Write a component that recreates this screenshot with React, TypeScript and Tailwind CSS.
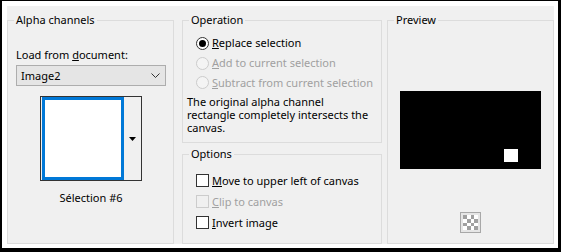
import React from "react";

function Radio({ checked, disabled }: { checked?: boolean; disabled?: boolean }) {
  return (
    <span
      className={
        "flex h-[13px] w-[13px] shrink-0 items-center justify-center rounded-full border " +
        (disabled ? "border-[#cccccc] bg-[#f4f4f4]" : "border-[#333333] bg-white")
      }
    >
      {checked ? <span className="h-[7px] w-[7px] rounded-full bg-black" /> : null}
    </span>
  );
}

function Check({ disabled }: { disabled?: boolean }) {
  return (
    <span
      className={
        "block h-[13px] w-[13px] shrink-0 border " +
        (disabled ? "border-[#cccccc] bg-[#f0f0f0]" : "border-[#333333] bg-white")
      }
    />
  );
}

function Row({
  control,
  ul,
  rest,
  disabled,
  h,
}: {
  control: React.ReactNode;
  ul: string;
  rest: string;
  disabled?: boolean;
  h: string;
}) {
  return (
    <div className={"flex items-center gap-[3px] " + h}>
      {control}
      <span className={"leading-[16px] " + (disabled ? "text-[#a0a0a0]" : "text-black")}>
        <u className="underline-offset-[1px]">{ul}</u>
        {rest}
      </span>
    </div>
  );
}

export default function App() {
  return (
    <div className="h-[252px] w-[561px] bg-black pb-[4px] pl-[2px] pr-[3px] pt-[1px]">
      <div className="h-full bg-white pb-[4px] pl-[5px] pr-[4px] pt-[5px]">
        <div className="flex h-full bg-[#f0f0f0] font-['Noto_Sans',sans-serif] text-[11px] text-black">
          {/* Alpha channels */}
          <fieldset className="mt-[6px] h-[232px] w-[167px] shrink-0 border border-[#dcdcdc]">
            <legend className="ml-[6px] px-[2px] leading-[16px]">Alpha channels</legend>
            <div className="flex flex-col pl-[8px]">
              <div className="mt-[19px] leading-[16px]">
                Load from <u className="underline-offset-[1px]">d</u>ocument:
              </div>
              <div className="mt-[2px] flex h-[21px] w-[150px] items-center justify-between border border-[#adadad] bg-[#e5e5e5] pl-[4px] pr-[5px]">
                <span className="leading-[16px]">Image2</span>
                <svg width="9" height="6" viewBox="0 0 9 6">
                  <polyline points="0.5,0.5 4.5,4.5 8.5,0.5" fill="none" stroke="#333" strokeWidth="1" />
                </svg>
              </div>
              <div className="ml-[24px] mt-[10px] flex h-[85px] w-[102px] border border-[#333333] bg-[#f0f0f0]">
                <div className="ml-[1px] h-full w-[82px] border-[3px] border-[#0078d7] bg-white" />
                <div className="flex flex-1 items-center justify-center">
                  <svg width="7" height="4" viewBox="0 0 7 4">
                    <polygon points="0,0 7,0 3.5,4" fill="#000" />
                  </svg>
                </div>
              </div>
              <div className="mt-[9px] w-[150px] text-center leading-[16px]">Sélection #6</div>
            </div>
          </fieldset>

          {/* Middle column */}
          <div className="ml-[8px] flex w-[200px] shrink-0 flex-col">
            <fieldset className="mt-[6px] h-[131px] border border-[#dcdcdc]">
              <legend className="ml-[6px] px-[2px] leading-[16px]">Operation</legend>
              <div className="mt-[5px] pl-[13px]">
                <Row h="h-[20px]" control={<Radio checked />} ul="R" rest="eplace selection" />
                <Row h="h-[20px]" control={<Radio disabled />} ul="A" rest="dd to current selection" disabled />
                <Row h="h-[19px]" control={<Radio disabled />} ul="S" rest="ubtract from current selection" disabled />
              </div>
              <div className="mt-[3px] pl-[4px] leading-[13px]">
                The original alpha channel
                <br />
                rectangle completely intersects the
                <br />
                canvas.
              </div>
            </fieldset>
            <fieldset className="mt-[3px] h-[98px] border border-[#dcdcdc]">
              <legend className="ml-[6px] px-[2px] leading-[16px]">Options</legend>
              <div className="mt-[8px] pl-[13px]">
                <Row h="h-[21px]" control={<Check />} ul="M" rest="ove to upper left of canvas" />
                <Row h="h-[21px]" control={<Check disabled />} ul="C" rest="lip to canvas" disabled />
                <Row h="h-[21px]" control={<Check />} ul="I" rest="nvert image" />
              </div>
            </fieldset>
          </div>

          {/* Preview */}
          <fieldset className="ml-[5px] mt-[6px] h-[232px] w-[167px] shrink-0 border border-[#dcdcdc]">
            <legend className="ml-[6px] px-[2px] leading-[16px]">Preview</legend>
            <div className="flex flex-col items-center">
              <div className="mt-[63px] flex h-[78px] w-[141px] bg-black pl-[104px] pt-[58px]">
                <div className="h-[13px] w-[14px] bg-white" />
              </div>
              <div className="mt-[43px] flex h-[21px] w-[21px] items-center justify-center border border-[#a8a8a8] bg-[#e6e6e6]">
                <svg width="15" height="15" viewBox="0 0 4 4" shapeRendering="crispEdges">
                  <rect width="4" height="4" fill="#ffffff" />
                  <rect x="0" y="0" width="1" height="1" fill="#a0a0a0" />
                  <rect x="2" y="0" width="1" height="1" fill="#a0a0a0" />
                  <rect x="1" y="1" width="1" height="1" fill="#a0a0a0" />
                  <rect x="3" y="1" width="1" height="1" fill="#a0a0a0" />
                  <rect x="0" y="2" width="1" height="1" fill="#a0a0a0" />
                  <rect x="2" y="2" width="1" height="1" fill="#a0a0a0" />
                  <rect x="1" y="3" width="1" height="1" fill="#a0a0a0" />
                  <rect x="3" y="3" width="1" height="1" fill="#a0a0a0" />
                </svg>
              </div>
            </div>
          </fieldset>
        </div>
      </div>
    </div>
  );
}
